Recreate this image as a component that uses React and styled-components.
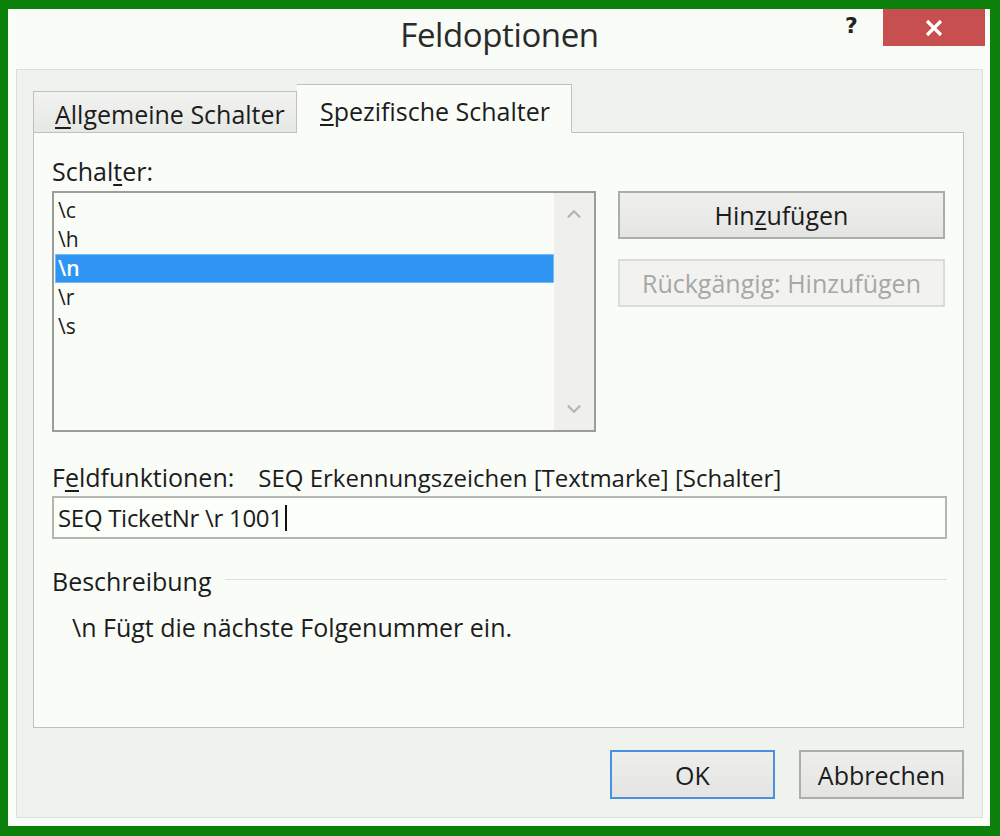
import React from 'react';
import styled, {createGlobalStyle} from "styled-components";
import {ChevronUp, ChevronDown} from "lucide-react";

const items = ['\\c', '\\h', '\\n', '\\r', '\\s'];

const App = () => {
    return (
        <>
            <GlobalStyle/>
            <Window>
                <TitleBar>
                    <Title>Feldoptionen</Title>
                    <HelpMark>?</HelpMark>
                    <CloseButton>
                        <svg width="20" height="20" viewBox="0 0 20 20">
                            <path d="M3 3 L17 17 M17 3 L3 17" stroke="#fff" strokeWidth="3.2" fill="none"/>
                        </svg>
                    </CloseButton>
                </TitleBar>
                <Body>
                    <TabStrip>
                        <Tab><u>A</u>llgemeine Schalter</Tab>
                        <Tab active><u>S</u>pezifische Schalter</Tab>
                    </TabStrip>
                    <Panel>
                        <TopGrid>
                            <Label>Schal<u>t</u>er:</Label>
                            <span/>
                            <ListBox>
                                <ListItems>
                                    {items.map(item => (
                                        <ListItem key={item} selected={item === '\\n'}>{item}</ListItem>
                                    ))}
                                </ListItems>
                                <ScrollTrack>
                                    <ChevronUp size={22} strokeWidth={2.4} color="#b3b5b1"/>
                                    <ChevronDown size={22} strokeWidth={2.4} color="#b3b5b1"/>
                                </ScrollTrack>
                            </ListBox>
                            <ButtonColumn>
                                <PushButton>Hin<u>z</u>ufügen</PushButton>
                                <PushButton disabled>Rückgängig: Hinzufügen</PushButton>
                            </ButtonColumn>
                        </TopGrid>
                        <FieldLabel>F<u>e</u>ldfunktionen:<Syntax>SEQ Erkennungszeichen [Textmarke] [Schalter]</Syntax></FieldLabel>
                        <TextField>SEQ TicketNr \r 1001<Caret/></TextField>
                        <GroupHeader>
                            <span>Beschreibung</span>
                            <GroupLine/>
                        </GroupHeader>
                        <Description>\n Fügt die nächste Folgenummer ein.</Description>
                    </Panel>
                    <Footer>
                        <DialogButton primary>OK</DialogButton>
                        <DialogButton>Abbrechen</DialogButton>
                    </Footer>
                </Body>
            </Window>
        </>
    );
};

export default App;

const GlobalStyle = createGlobalStyle`
  html, body {
    margin: 0;
    padding: 0;
    background: #0b800b;
  }
  body {
    width: 1000px;
    height: 836px;
    overflow: hidden;
    font-family: "Open Sans", "Noto Sans", sans-serif;
    font-size: 25px;
    color: #1c1c1c;
  }
  u {
    text-decoration-thickness: 2px;
    text-underline-offset: 3px;
  }
`

const Window = styled.div`
  margin: 9px 10px 0 8px;
  width: 982px;
  height: 817px;
  box-sizing: border-box;
  background: #fbfdf9;
  padding: 0 7px 8px 8px;
  display: flex;
  flex-direction: column;
`

const TitleBar = styled.div`
  position: relative;
  height: 60px;
  display: flex;
  justify-content: center;
  align-items: flex-start;
  background: #f9fbf7;
`

const Title = styled.div`
  margin-top: 6px;
  font-size: 33px;
  line-height: 40px;
  letter-spacing: -0.4px;
  color: #2a2a2a;
`

const HelpMark = styled.div`
  position: absolute;
  left: 829px;
  top: 4px;
  font-family: "DejaVu Sans", sans-serif;
  font-weight: bold;
  font-size: 22px;
  color: #222;
`

const CloseButton = styled.div`
  position: absolute;
  right: -2px;
  top: 0;
  width: 102px;
  height: 37px;
  background: #c84f4f;
  display: flex;
  align-items: center;
  justify-content: center;
`

const Body = styled.div`
  flex: 1;
  display: flex;
  flex-direction: column;
  background: #f0f2ee;
  border: 1px solid #dddfdb;
  padding: 15px 18px 17px 16px;
`

const TabStrip = styled.div`
  height: 48px;
  display: flex;
  align-items: flex-end;
  position: relative;
  z-index: 1;
  margin-bottom: -1px;
`

const Tab = styled.div`
  box-sizing: border-box;
  height: ${p => p.active ? '49px' : '42px'};
  width: ${p => p.active ? '275px' : '264px'};
  padding: ${p => p.active ? '11px 0 0 23px' : '7px 0 0 21px'};
  border: 1px solid #bfc1bd;
  border-bottom: ${p => p.active ? '1px solid #fafcf8' : '1px solid #bfc1bd'};
  border-left: ${p => p.active ? 'none' : '1px solid #bfc1bd'};
  background: ${p => p.active ? '#fafcf8' : 'linear-gradient(#f2f3f1, #e6e8e4)'};
  line-height: 30px;
  white-space: nowrap;
  color: #1c1c1c;
`

const Panel = styled.div`
  height: 596px;
  box-sizing: border-box;
  background: #fafcf8;
  border: 1px solid #bfc1bd;
  padding: 24px 16px 0 18px;
`

const TopGrid = styled.div`
  display: grid;
  grid-template-columns: 544px 327px;
  column-gap: 22px;
  row-gap: 6px;
`

const Label = styled.div`
  line-height: 28px;
`

const ListBox = styled.div`
  height: 241px;
  box-sizing: border-box;
  border: 2px solid #9b9d99;
  background: #fafcf8;
  display: flex;
`

const ListItems = styled.div`
  flex: 1;
  padding: 3px 0 0 1px;
`

const ListItem = styled.div`
  height: 29px;
  box-sizing: border-box;
  padding-left: 2px;
  font-size: 21px;
  line-height: 27px;
  color: ${p => p.selected ? '#fff' : '#1c1c1c'};
  font-weight: ${p => p.selected ? 600 : 400};
  background: ${p => p.selected ? '#2f95f2' : 'transparent'};
  border: 1px solid ${p => p.selected ? '#78bbf7' : 'transparent'};
`

const ScrollTrack = styled.div`
  width: 40px;
  background: #eff0ee;
  display: flex;
  flex-direction: column;
  align-items: center;
  justify-content: space-between;
  padding: 10px 0 10px;
`

const ButtonColumn = styled.div`
  display: flex;
  flex-direction: column;
  gap: 20px;
`

const PushButton = styled.div`
  height: 48px;
  box-sizing: border-box;
  border: 2px solid ${p => p.disabled ? '#dadcd8' : '#acaeaa'};
  background: ${p => p.disabled ? '#f2f3f1' : 'linear-gradient(#eff0ee, #e5e6e4)'};
  color: ${p => p.disabled ? '#a6a8a4' : '#1c1c1c'};
  display: flex;
  align-items: center;
  justify-content: center;
  white-space: nowrap;
`

const FieldLabel = styled.div`
  margin-top: 31px;
  line-height: 28px;
  white-space: nowrap;
`

const Syntax = styled.span`
  margin-left: 24px;
  font-size: 24px;
`

const TextField = styled.div`
  margin-top: 4px;
  height: 43px;
  box-sizing: border-box;
  border: 2px solid #b4b6b2;
  background: #fcfefa;
  padding-left: 4px;
  display: flex;
  align-items: center;
  font-size: 24px;
  letter-spacing: -0.3px;
`

const Caret = styled.span`
  display: inline-block;
  width: 2px;
  height: 26px;
  margin-left: 2px;
  background: #111;
`

const GroupHeader = styled.div`
  margin-top: 28px;
  display: flex;
  align-items: center;
  gap: 13px;
  line-height: 28px;
`

const GroupLine = styled.div`
  flex: 1;
  height: 1px;
  margin-top: -3px;
  background: #dcdeda;
`

const Description = styled.div`
  margin-top: 18px;
  padding-left: 20px;
  line-height: 28px;
`

const Footer = styled.div`
  margin-top: 22px;
  display: flex;
  justify-content: flex-end;
  gap: 24px;
`

const DialogButton = styled.div`
  width: 165px;
  height: 49px;
  box-sizing: border-box;
  border: 2px solid ${p => p.primary ? '#4a90dc' : '#acaeaa'};
  background: linear-gradient(#eeefed, #e4e5e3);
  display: flex;
  align-items: center;
  justify-content: center;
  color: #1c1c1c;
`
